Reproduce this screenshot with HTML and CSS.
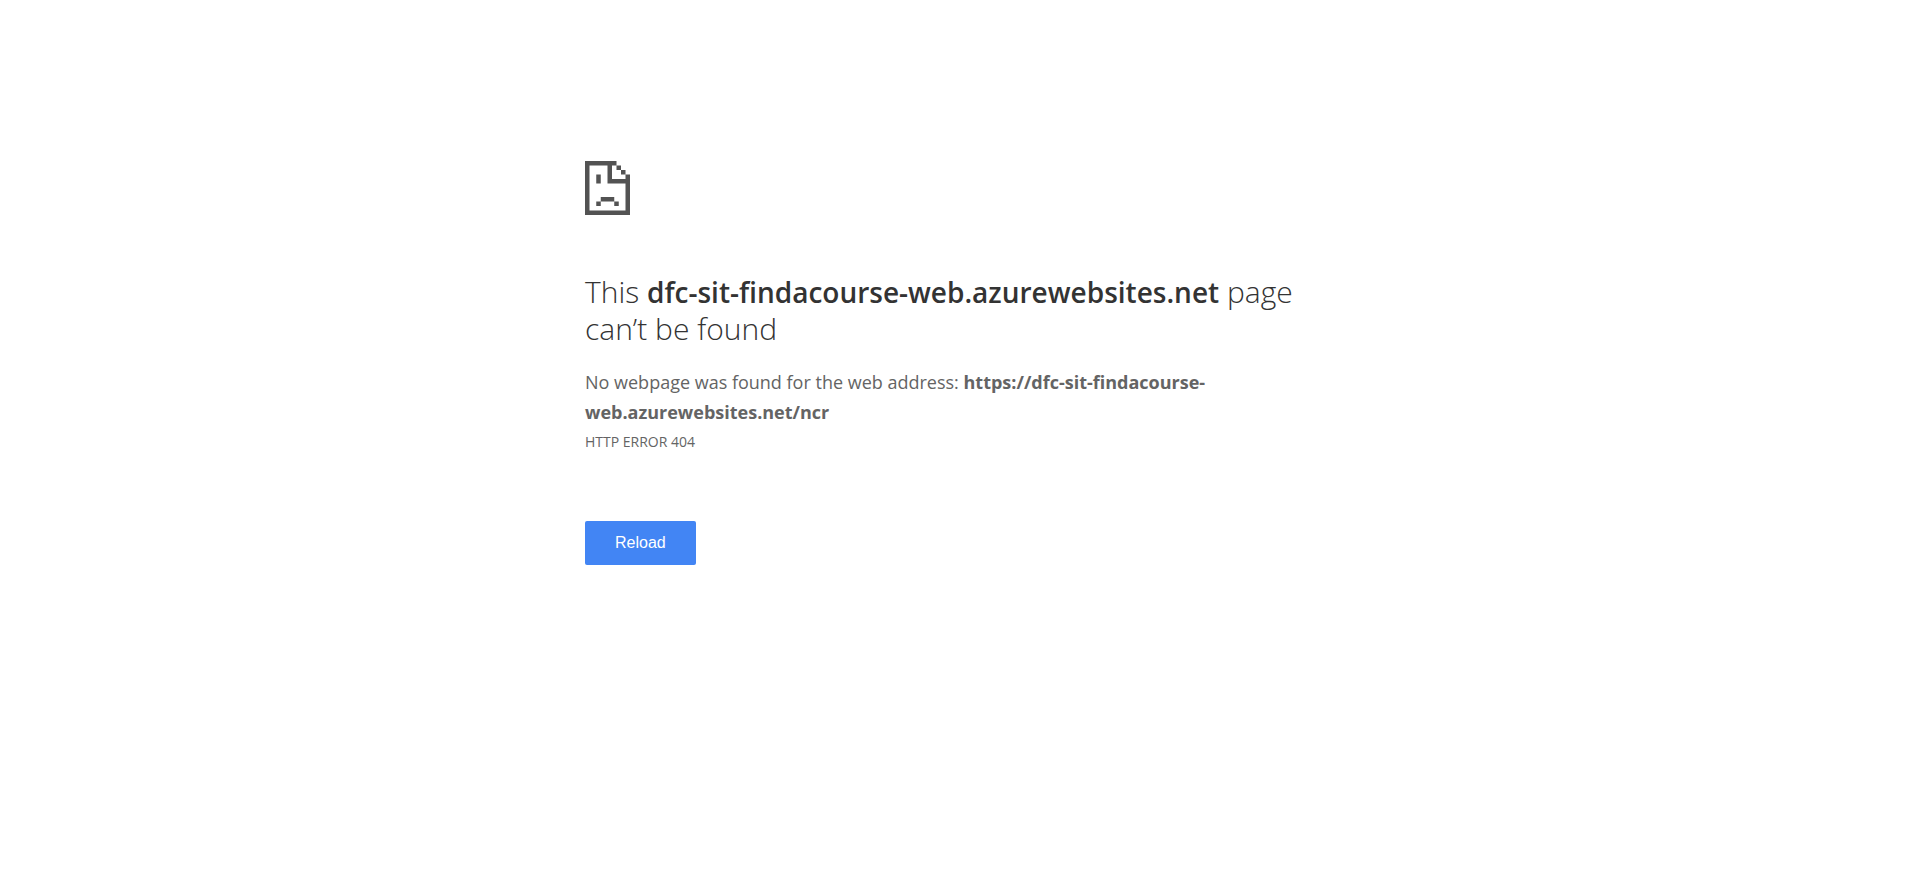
FILE: index.html
```html
<!DOCTYPE html>
<html lang="en">
<head>
<meta charset="utf-8">
<meta name="viewport" content="width=device-width, initial-scale=1">
<title>dfc-sit-findacourse-web.azurewebsites.net</title>
<link rel="stylesheet" href="styles.css">
</head>
<body>
<main class="error-page">
  <svg class="error-icon" viewBox="0 0 20 24" aria-hidden="true">
    <path fill="#535353" d="M0 0H14V2H12V8H18V6H20V24H0ZM2 2V22H18V10H10V2ZM14 2H16V4H14ZM16 4H18V6H16ZM5 6H7V10H5ZM7 16H13V18H7ZM5 18H7V20H5ZM13 18H15V20H13Z" fill-rule="evenodd"/>
  </svg>
  <h1 class="error-title">This <strong class="error-host">dfc-sit-findacourse-web.azurewebsites.net</strong> page can’t be found</h1>
  <p class="error-summary">No webpage was found for the web address: <strong class="error-url">https://dfc-sit-findacourse-web.azurewebsites.net/ncr</strong></p>
  <p class="error-code">HTTP ERROR 404</p>
  <button class="reload-button" type="button">Reload</button>
</main>
</body>
</html>
```
FILE: styles.css
```css
body {
  margin: 0;
  background: #fff;
  color: #646464;
  font-family: "Open Sans", "Noto Sans", sans-serif;
}

.error-page {
  box-sizing: border-box;
  max-width: 750px;
  margin: 0 auto;
  padding-top: 161px;
}

.error-icon {
  display: block;
  width: 45px;
  height: 54px;
}

.error-title {
  margin: 58px 0 20px;
  color: #333;
  font-size: 30px;
  font-weight: 300;
  line-height: 37px;
}

.error-host {
  font-size: 28px;
  font-weight: 600;
  line-height: 1;
}

.error-summary {
  margin: 0;
  font-size: 18px;
  line-height: 30px;
}

.error-url {
  font-weight: 700;
}

.error-code {
  margin: 0;
  font-size: 14px;
  line-height: 30px;
}

.reload-button {
  display: block;
  margin: 64px 0 0;
  padding: 12px 30px;
  border: 0;
  border-radius: 2px;
  background: #4285f4;
  color: #fff;
  font-family: "Liberation Sans", Arial, sans-serif;
  font-size: 16px;
  line-height: 20px;
  cursor: pointer;
}
```
